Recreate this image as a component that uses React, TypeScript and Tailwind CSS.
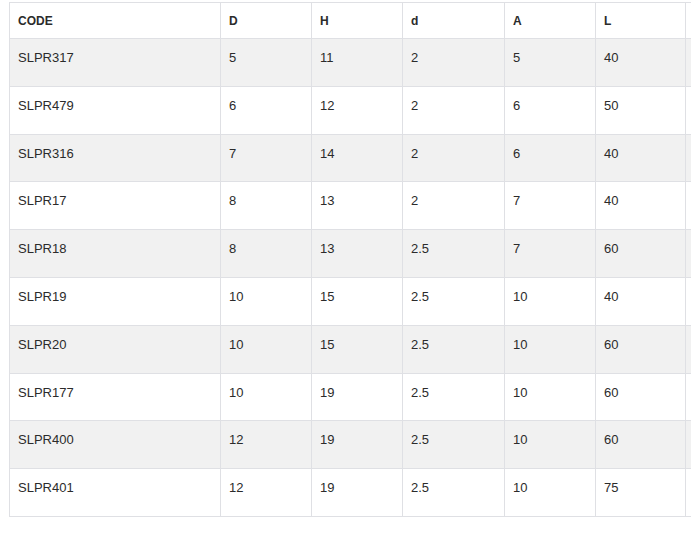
const headers = ['CODE', 'D', 'H', 'd', 'A', 'L', ''];
const widths = ['w-[211px]', 'w-[91px]', 'w-[91px]', 'w-[102px]', 'w-[91px]', 'w-[90px]', 'w-[90px]'];

const rows = [
  ['SLPR317', '5', '11', '2', '5', '40', ''],
  ['SLPR479', '6', '12', '2', '6', '50', ''],
  ['SLPR316', '7', '14', '2', '6', '40', ''],
  ['SLPR17', '8', '13', '2', '7', '40', ''],
  ['SLPR18', '8', '13', '2.5', '7', '60', ''],
  ['SLPR19', '10', '15', '2.5', '10', '40', ''],
  ['SLPR20', '10', '15', '2.5', '10', '60', ''],
  ['SLPR177', '10', '19', '2.5', '10', '60', ''],
  ['SLPR400', '12', '19', '2.5', '10', '60', ''],
  ['SLPR401', '12', '19', '2.5', '10', '75', ''],
];

export default function App() {
  return (
    <div className="w-full min-h-[536px] overflow-hidden bg-white font-['Liberation_Sans',Arial,sans-serif] text-[#2b2b2b]">
      <div className="pl-[9px] pt-[2px]">
        <table className="table-fixed border-collapse w-[767px]">
          <colgroup>
            {widths.map((w, i) => (
              <col key={i} className={w} />
            ))}
          </colgroup>
          <thead>
            <tr className="h-[36px]">
              {headers.map((h, i) => (
                <th
                  key={i}
                  className="border border-[#dfe0e4] px-[8px] pt-[9px] pb-0 text-left align-top text-[12px] leading-[18px] font-bold"
                >
                  {h}
                </th>
              ))}
            </tr>
          </thead>
          <tbody>
            {rows.map((row, r) => (
              <tr key={r} className={`h-[47.8px] ${r % 2 === 0 ? 'bg-[#f1f1f1]' : 'bg-white'}`}>
                {row.map((cell, c) => (
                  <td
                    key={c}
                    className="border border-[#dfe0e4] px-[8px] pt-[10px] pb-0 align-top text-[13px] leading-[18px]"
                  >
                    {cell}
                  </td>
                ))}
              </tr>
            ))}
          </tbody>
        </table>
      </div>
    </div>
  );
}
